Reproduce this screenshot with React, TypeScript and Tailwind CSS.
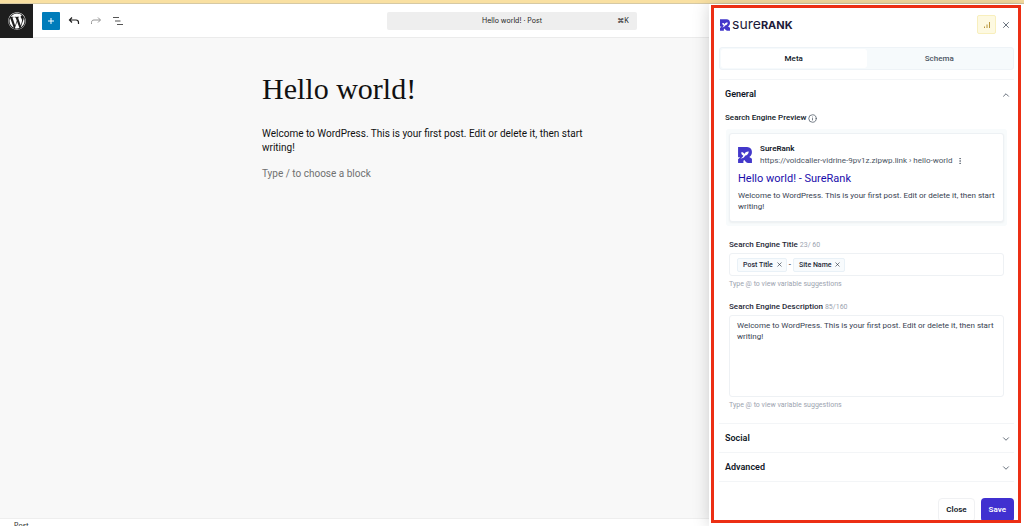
import { useState } from 'react'
import { ChevronDown, ChevronUp, EllipsisVertical, Info, X } from 'lucide-react'
import { FaWordpress } from 'react-icons/fa'
import clsx from 'clsx'

const EXCERPT =
  'Welcome to WordPress. This is your first post. Edit or delete it, then start writing!'

function RankMark({ className }: { className: string }) {
  return (
    <svg viewBox="0 0 13 15" className={className} aria-hidden="true">
      <path
        fill="#4338ca"
        d="M0 0H8.500C11.500 0 13 2 13 4.700 13 7 12 8.500 10.500 9.300L13 11v4H9.500C7.800 15 6.800 13.500 6 12.200L5 13V15H0V11.500L2 9.500H0Z"
      />
      <path
        fill="#fff"
        d="M3 5C4.400 4.800 5.400 5.400 5.900 6.800 6.400 5 7.800 4.200 10 4.300 10 6.500 8.600 7.900 6.500 8.200 6.200 9.700 4.500 10.700 2 10.800 3.600 10.200 4.700 9.300 4.900 8 3.500 7.600 2.900 6.500 3 5Z"
      />
    </svg>
  )
}

function Toolbar() {
  return (
    <header className="grid h-[34px] flex-shrink-0 grid-cols-[1fr_250px_1fr] items-center border-b border-[#ebebeb] bg-white">
      <div className="flex h-[34px] items-center">
        <a
          href="#posts"
          aria-label="View posts"
          className="flex h-full w-[33px] items-center justify-center bg-[#1e1e1e] text-white"
        >
          <FaWordpress className="size-[18px]" />
        </a>
        <button
          aria-label="Add block"
          className="ml-[9px] flex size-[18px] items-center justify-center rounded-[1px] bg-[#007cba] text-white"
        >
          <svg viewBox="0 0 8 8" className="size-2" fill="none" stroke="currentColor">
            <path d="M4 1v6M1 4h6" />
          </svg>
        </button>
        <button aria-label="Undo" className="ml-2 text-[#1e1e1e]">
          <svg viewBox="0 0 12 12" className="size-3" fill="none" stroke="currentColor" strokeWidth="1.200">
            <path d="M4 2.500 1.500 5 4 7.500M1.800 5H8c1.600 0 2.500 1 2.500 2.500v1.500" />
          </svg>
        </button>
        <button aria-label="Redo" className="ml-[10px] text-[#949494]">
          <svg viewBox="0 0 12 12" className="size-3" fill="none" stroke="currentColor">
            <path d="M8 2.500 10.500 5 8 7.500M10.200 5H4C2.400 5 1.500 6 1.500 7.500v1.500" />
          </svg>
        </button>
        <button aria-label="Document overview" className="ml-[10px] text-[#555]">
          <svg viewBox="0 0 12 12" className="size-3" fill="none" stroke="currentColor" strokeWidth="1.200">
            <path d="M1 2.500h6M3 6h5.500M5 9.500h6" />
          </svg>
        </button>
      </div>
      <button className="flex h-[18px] items-center rounded-[2px] bg-[#eee] px-2 text-[7px] leading-[18px] text-[#1e1e1e]">
        <span className="flex-1" />
        <span>Hello world! · Post</span>
        <span className="flex-1 text-right">⌘K</span>
      </button>
    </header>
  )
}

function Editor() {
  return (
    <main className="min-h-0 flex-1 bg-[#f8f8f8] pr-[175px]">
      <article className="mx-auto w-[325px] pt-[31px] font-['Roboto',sans-serif] text-[10px] leading-[14px] text-[#111]">
        <h1 className="font-['Liberation_Serif',serif] text-[30px] leading-10">Hello world!</h1>
        <p className="mt-[18px]">{EXCERPT}</p>
        <p className="mt-3 text-[#707070]">Type / to choose a block</p>
      </article>
    </main>
  )
}

interface SectionProps {
  title: string
  open?: boolean
}

function SectionHeading({ title, open }: SectionProps) {
  const Icon = open ? ChevronUp : ChevronDown
  return (
    <h2 className={clsx('mx-1 border-t border-[#f3f5f7]', !open && 'last:border-b')}>
      <button
        aria-expanded={!!open}
        className="flex h-7 w-full items-center justify-between pt-px pr-[3px] pl-[6px] text-[9px] font-semibold text-[#111827]"
      >
        {title}
        <Icon className="size-[10px] text-[#4b5563]" strokeWidth={2} />
      </button>
    </h2>
  )
}

function Variable({ name }: { name: string }) {
  return (
    <span className="flex h-[14px] items-center gap-[3px] rounded-[2px] border border-[#e9f1f7] bg-[#f8fbfd] pr-[3px] pl-[5px] text-[7px] font-medium text-[#1f2937]">
      {name}
      <button aria-label={`Remove ${name}`}>
        <X className="size-[7px]" strokeWidth={2} />
      </button>
    </span>
  )
}

function SearchPreview() {
  return (
    <div className="mx-[11px] mt-1 rounded-[3px] bg-[#f8fbfc] px-[3px] py-1">
      <div className="rounded-[3px] border border-[#edf1f4] bg-white pt-[9px] pr-1 pb-[9px] pl-2 shadow-xs">
        <div className="flex items-center gap-2">
          <RankMark className="h-4 w-[14px]" />
          <div className="text-[8px] leading-3">
            <p className="font-semibold text-[#111827]">SureRank</p>
            <p className="flex items-center gap-1 text-[#4b5563]">
              https://voidcaller-vidrine-9pv1z.zipwp.link › hello-world
              <EllipsisVertical className="size-2" />
            </p>
          </div>
        </div>
        <p className="mt-1 text-[11px] leading-4 text-[#1a0dab]">Hello world! - SureRank</p>
        <p className="mt-[3px] text-[8px] leading-[11px] text-[#374151]">{EXCERPT}</p>
      </div>
    </div>
  )
}

function SureRankPanel() {
  const [tab, setTab] = useState('Meta')
  return (
    <aside className="absolute inset-y-0 right-0 flex w-[315px] flex-col overflow-hidden bg-white font-['Roboto',sans-serif] shadow-[0_0_16px_rgba(0,0,0,0.18)]">
      <div className="mx-[10px] mt-[11px] flex h-[19px] flex-shrink-0 items-center pl-px">
        <RankMark className="h-3 w-[10px]" />
        <p className="ml-[2px] flex flex-1 items-baseline font-['Inter',sans-serif] text-[#1e1b3a]">
          <span className="text-[14px] leading-4">sure</span>
          <span className="text-[11px] leading-4 font-bold">RANK</span>
        </p>
        <button
          aria-label="Page checks"
          className="flex size-[19px] items-center justify-center rounded-[2px] border border-[#f8efbd] bg-[#fdf9e1] text-[#b8963c]"
        >
          <svg viewBox="0 0 8 8" className="size-2" fill="none" stroke="currentColor">
            <path d="M1.500 7V5.500M4 7V3.500M6.500 7V1" />
          </svg>
        </button>
        <button aria-label="Close panel" className="mr-[3px] ml-[5px] text-[#4b5563]">
          <X className="size-[10px]" strokeWidth={2} />
        </button>
      </div>

      <div
        role="tablist"
        className="mx-[10px] mt-[13px] grid h-[23px] flex-shrink-0 grid-cols-2 rounded-[3px] border border-[#eef3f7] bg-[#f6fafc] p-px text-[8px] font-medium"
      >
        {['Meta', 'Schema'].map((name) => (
          <button
            key={name}
            role="tab"
            aria-selected={tab === name}
            onClick={() => setTab(name)}
            className={clsx(
              'rounded-[3px]',
              tab === name ? 'bg-white text-[#111827]' : 'text-[#4b5563]'
            )}
          >
            {name}
          </button>
        ))}
      </div>

      <div className="mx-[6px] mt-[9px]">
        <SectionHeading title="General" open />
        <div className="-mx-[6px] pb-3">
          <p className="mx-4 mt-1 flex h-3 items-center gap-[2px] text-[8px] font-medium text-[#111827]">
            Search Engine Preview
            <Info className="size-[9px] text-[#4b5563]" strokeWidth={2} />
          </p>
          <div className="mt-[5px] px-[6px]">
            <SearchPreview />
          </div>
          <div className="mx-5 mt-[13px] text-[8px] leading-3">
            <p className="font-medium text-[#1f2937]">
              Search Engine Title <span className="text-[7px] font-normal text-[#9ca3af]">23/ 60</span>
            </p>
            <div className="mt-[2px] flex h-[23px] items-center gap-[2px] rounded-[3px] border border-[#eef1f4] px-[7px]">
              <Variable name="Post Title" />
              -
              <Variable name="Site Name" />
            </div>
            <p className="mt-[2px] text-[7px] text-[#9ca3af]">Type @ to view variable suggestions</p>
            <label htmlFor="description" className="mt-[11px] block font-medium text-[#1f2937]">
              Search Engine Description{' '}
              <span className="text-[7px] font-normal text-[#9ca3af]">85/160</span>
            </label>
            <textarea
              id="description"
              defaultValue={EXCERPT}
              className="mt-[2px] block h-[82px] w-full resize-none rounded-[3px] border border-[#eef1f4] py-1 pr-1 pl-[7px] leading-[11px] text-[#374151] outline-none"
            />
            <p className="mt-[2px] text-[7px] text-[#9ca3af]">Type @ to view variable suggestions</p>
          </div>
        </div>
        <SectionHeading title="Social" />
        <SectionHeading title="Advanced" />
      </div>

      <div className="mx-[10px] mt-4 flex flex-shrink-0 justify-end gap-[6px] text-[8px] font-semibold">
        <button className="h-6 rounded-[4px] border border-[#f0f1f3] px-[7px] text-[#111827]">Close</button>
        <button className="h-6 rounded-[4px] bg-[#4030d0] px-2 text-white">Save</button>
      </div>

      {/* highlight frame around the panel */}
      <div className="pointer-events-none absolute top-px right-[3px] bottom-[3px] left-[2px] border-3 border-[#ec2f14]" />
    </aside>
  )
}

export default function App() {
  return (
    <div className="flex h-screen flex-col overflow-hidden font-['Inter',sans-serif]">
      <div className="h-1 flex-shrink-0 border-b border-[#d6c9a4] bg-[#f9e0a2]" />
      <div className="relative flex min-h-0 flex-1 flex-col">
        <Toolbar />
        <Editor />
        <footer className="h-2 flex-shrink-0 overflow-hidden border-t border-[#eee] bg-white px-[14px] pt-[2px] text-[7px] leading-[10px] text-[#1e1e1e]">
          Post
        </footer>
        <SureRankPanel />
      </div>
    </div>
  )
}
